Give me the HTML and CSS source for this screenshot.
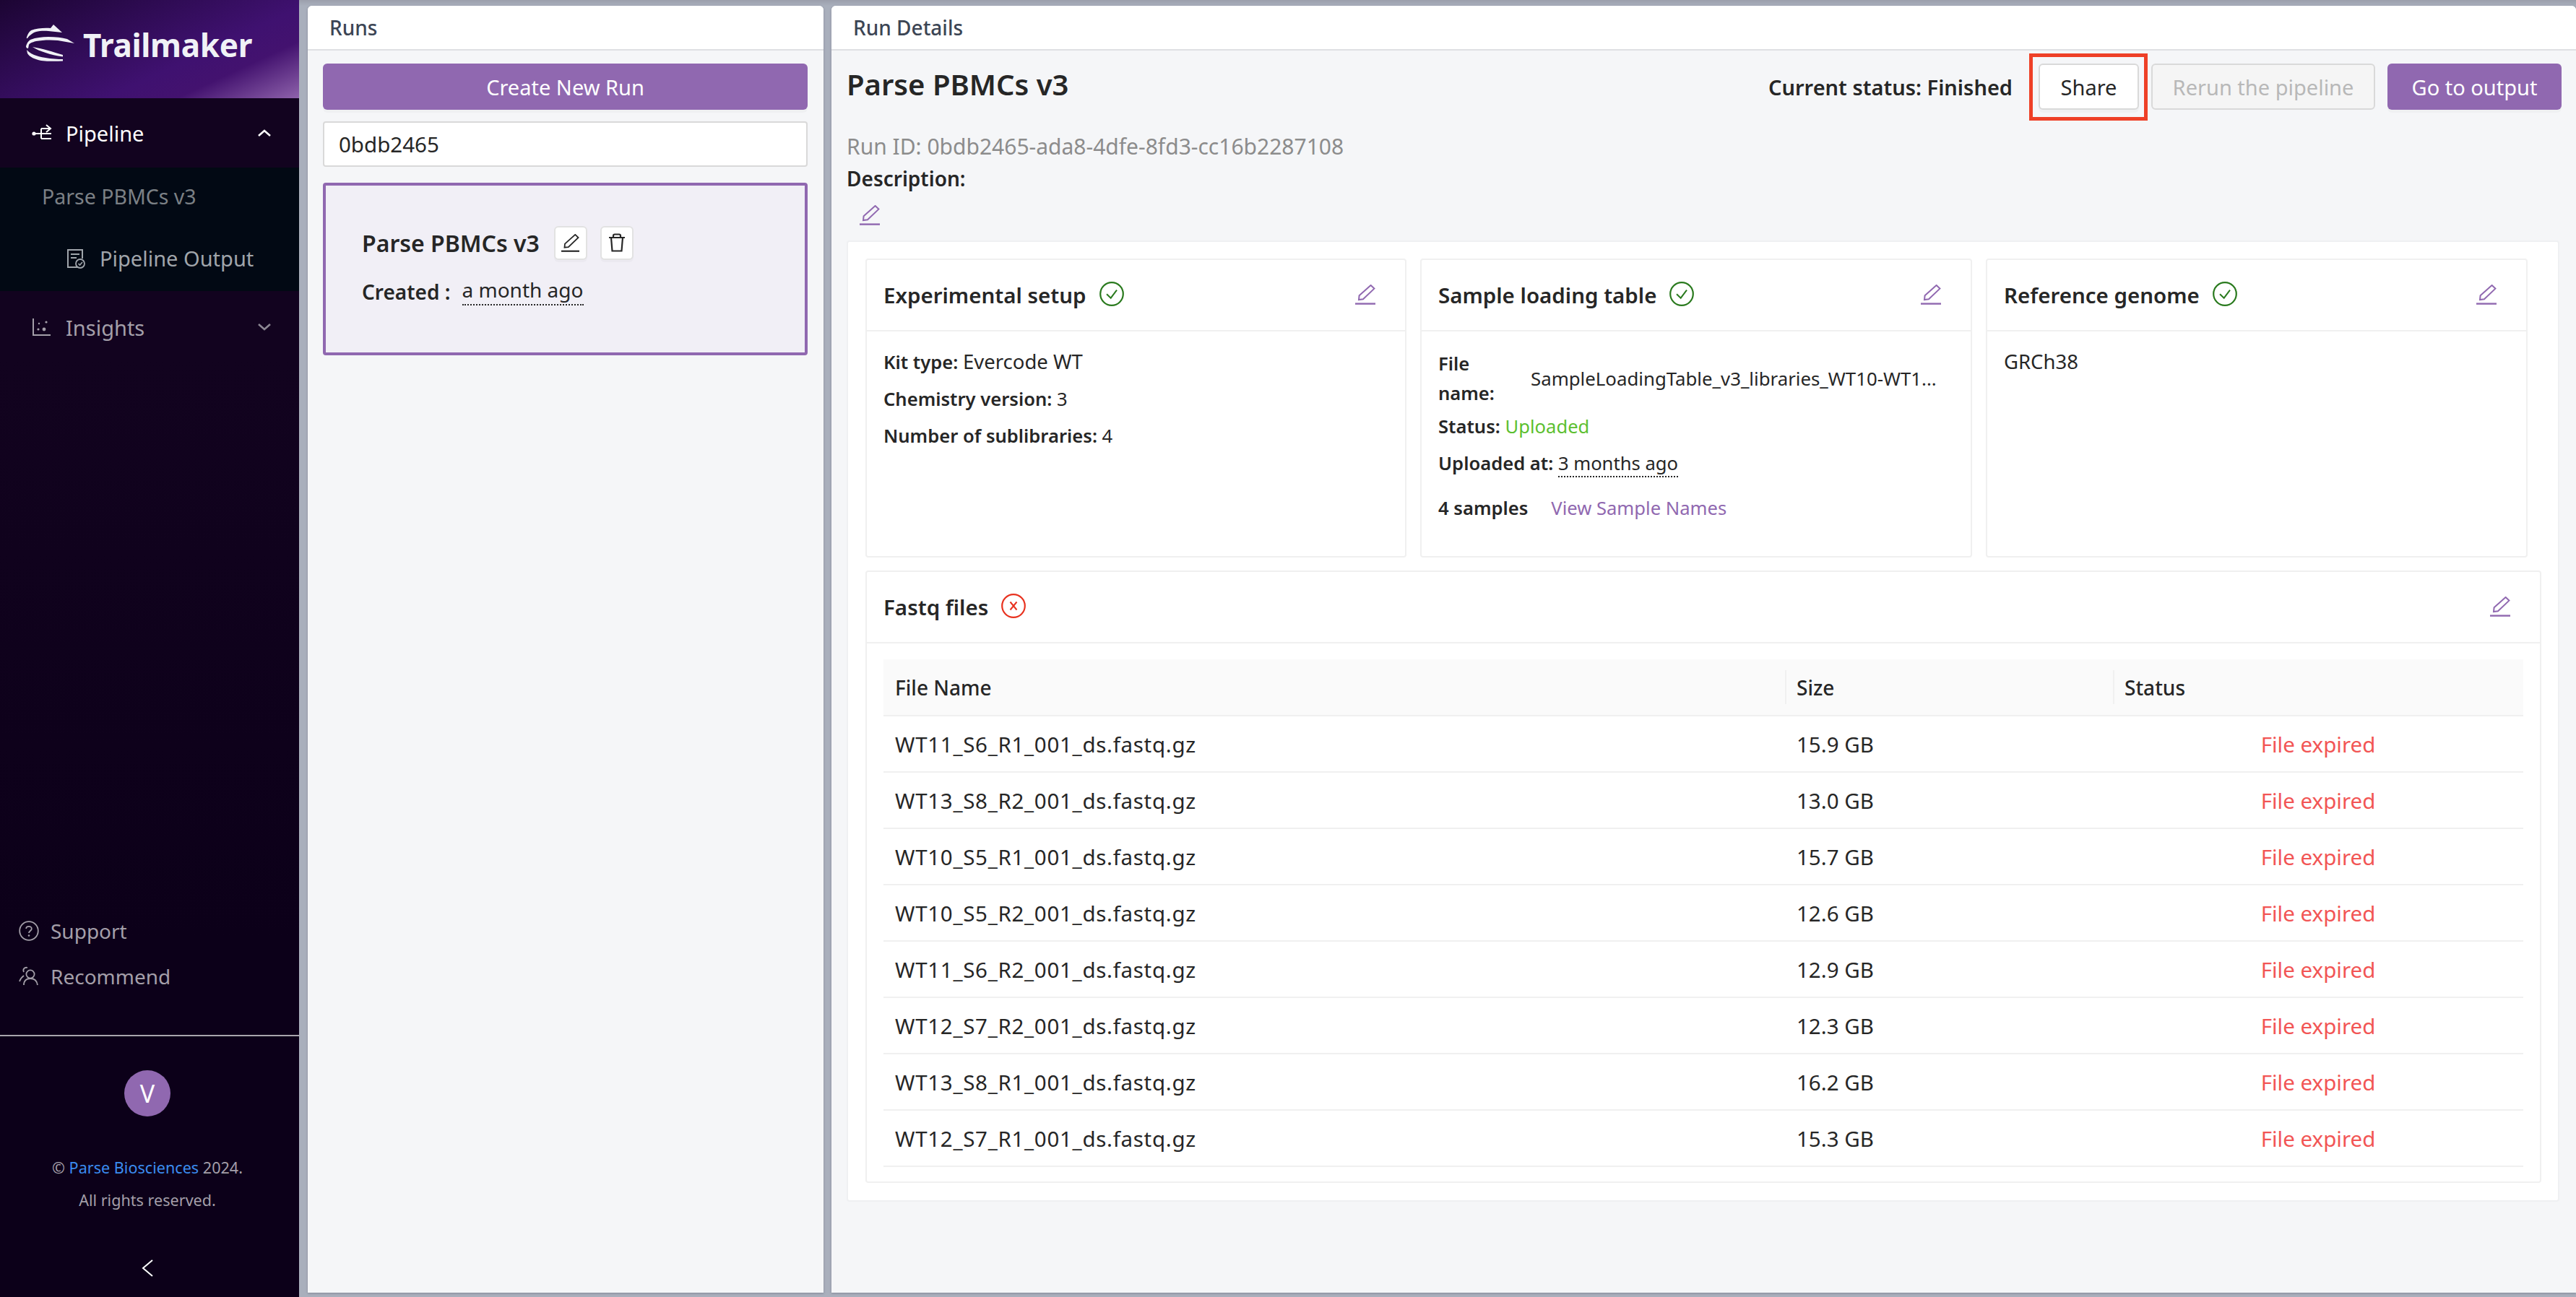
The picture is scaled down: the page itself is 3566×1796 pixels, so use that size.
FILE: index.html
```html
<!DOCTYPE html>
<html>
<head>
	<meta charset="utf-8">
	<title>Trailmaker</title>
	<link rel="stylesheet" href="styles.css">
</head>
<body>
<svg class="defs" width="0" height="0">
	<symbol id="pen" viewBox="0 0 28 28">
		<path d="M5 21 L5.6 15.3 L21.6 1 L26.4 5.6 L11 20.3 Z" fill="none" stroke="currentColor" stroke-width="2"/>
		<rect x="0" y="25.4" width="28" height="2.4" fill="currentColor"/>
	</symbol>
	<symbol id="ok" viewBox="0 0 34 34">
		<circle cx="17" cy="17" r="15.8" fill="none" stroke="#2a7a1e" stroke-width="2.2"/>
		<path d="M10 17.3 L15.7 22.7 L24 11.7" fill="none" stroke="#2a7a1e" stroke-width="2"/>
	</symbol>
</svg>

<div class="app">
	<aside class="side">
		<div class="brand">
			<svg class="brand-mark" viewBox="0 0 68 52" width="68" height="52">
				<path d="M0.7 19 C2 13 5 9.5 7 8 C15 5 25 4.5 34 5 L38 0 L50 11 L31 9 C24 8.5 18 9 14 10 C8 12 4 16 2 19 Z" fill="#f0f1f6"/>
				<path d="M0 30 C1 26 3 23 6 21 C14 18 22 17 31 17 C41 17 50 18 57 20 L67 26 L44 22 C34 21 22 21.5 14 23 C8 24.5 5 26 4 28 L3 33 C1 33 0 32 0 30 Z" fill="#f0f1f6"/>
				<path d="M9 31 C22 33 38 38 51 42 L51 44.5 C42 43.5 34 41.5 27 39 C20 37 14 34 9 31 Z" fill="#f0f1f6"/>
				<path d="M1 35 C5 40 14 44 27 46 C35 47.5 44 48 51 48 L51 50.5 C40 51 30 51 21 50 C12 48 5 45 2 40 Z" fill="#f0f1f6"/>
			</svg>
			<span class="brand-name">Trailmaker</span>
		</div>

		<div class="nav-item nav-open">
			<svg class="nav-ico" viewBox="0 0 28 26" width="28" height="26">
				<circle cx="3" cy="14" r="2.6" fill="#fff"/>
				<path d="M3 14 H13 M13 7 H26 M20 2 L26 7 L20 12 M13 7 V21 M13 21 H27 M13 14 H27" fill="none" stroke="#fff" stroke-width="2"/>
			</svg>
			<span>Pipeline</span>
			<svg class="chev" viewBox="0 0 20 12" width="20" height="12"><path d="M2 10 L10 3 L18 10" fill="none" stroke="#fff" stroke-width="2.6"/></svg>
		</div>
		<div class="subnav">
			<div class="sub-title">Parse PBMCs v3</div>
			<div class="sub-item">
				<svg viewBox="0 0 26 28" width="26" height="28">
					<path d="M16 26 H2 V2 H22 V14 M6 8 H18 M6 13 H14" fill="none" stroke="#a0a5ab" stroke-width="2"/>
					<circle cx="19" cy="21" r="6" fill="none" stroke="#a0a5ab" stroke-width="1.8"/>
					<path d="M16.5 21 L18.5 23 L22 19" fill="none" stroke="#a0a5ab" stroke-width="1.6"/>
				</svg>
				<span>Pipeline Output</span>
			</div>
		</div>
		<div class="nav-item nav-shut">
			<svg class="nav-ico" viewBox="0 0 28 26" width="28" height="26">
				<path d="M2 1 V24 H26" fill="none" stroke="#a49fa9" stroke-width="2"/>
				<circle cx="9" cy="16" r="1.6" fill="#a49fa9"/>
				<circle cx="17" cy="16" r="2.4" fill="#a49fa9"/>
				<circle cx="20" cy="6" r="1.6" fill="#a49fa9"/>
				<circle cx="10" cy="8" r="1.2" fill="#a49fa9"/>
			</svg>
			<span>Insights</span>
			<svg class="chev" viewBox="0 0 20 12" width="20" height="12"><path d="M2 2 L10 9 L18 2" fill="none" stroke="#8c8793" stroke-width="2.6"/></svg>
		</div>

		<div class="side-grow"></div>

		<div class="help-item">
			<svg viewBox="0 0 28 28" width="28" height="28">
				<circle cx="14" cy="14" r="12.8" fill="none" stroke="#a49fa9" stroke-width="1.8"/>
				<path d="M10.2 11 C10.2 6.8 17.8 6.8 17.8 11 C17.8 14 14 14 14 17" fill="none" stroke="#a49fa9" stroke-width="1.8"/>
				<circle cx="14" cy="20.5" r="1.3" fill="#a49fa9"/>
			</svg>
			<span>Support</span>
		</div>
		<div class="help-item">
			<svg viewBox="0 0 28 28" width="28" height="28">
				<circle cx="16" cy="11" r="5.6" fill="none" stroke="#a49fa9" stroke-width="1.8"/>
				<path d="M7 26 C7 19 11 17 16 17 C21 17 25 19 26 26 M12 2 C8 1 5 4 7 8 M7 13 C4 15 2 18 1 21" fill="none" stroke="#a49fa9" stroke-width="1.8"/>
			</svg>
			<span>Recommend</span>
		</div>

		<div class="side-foot">
			<div class="avatar">V</div>
			<div class="legal">© <span class="legal-link">Parse Biosciences</span> 2024.</div>
			<div class="legal">All rights reserved.</div>
			<svg class="collapse" viewBox="0 0 16 24" width="16" height="24"><path d="M15 1 L2 12 L15 23" fill="none" stroke="#fff" stroke-width="2"/></svg>
		</div>
	</aside>

	<main class="panels">
		<section class="panel panel-runs">
			<div class="panel-head">Runs</div>
			<div class="panel-body runs-body">
				<div class="btn btn-main btn-wide">Create New Run</div>
				<div class="search">0bdb2465</div>
				<div class="run-card">
					<div class="run-title">
						<span>Parse PBMCs v3</span>
						<span class="ico-btn"><svg width="25" height="25" color="#262626"><use href="#pen"/></svg></span>
						<span class="ico-btn">
							<svg viewBox="0 0 24 26" width="24" height="26">
								<path d="M1 6 H23 M7 6 V3.5 Q7 1.5 9 1.5 H15 Q17 1.5 17 3.5 V6 M4 6 L5.5 24.5 H18.5 L20 6" fill="none" stroke="#262626" stroke-width="2.2"/>
							</svg>
						</span>
					</div>
					<div class="run-created"><b>Created :</b><span class="dotted">a month ago</span></div>
				</div>
			</div>
		</section>

		<section class="panel panel-details">
			<div class="panel-head">Run Details</div>
			<div class="panel-body details-body">
				<div class="top-row">
					<h1 class="run-name">Parse PBMCs v3</h1>
					<div class="actions">
						<span class="status-now">Current status: Finished</span>
						<div class="btn btn-plain btn-share">Share<span class="mark"></span></div>
						<div class="btn btn-off">Rerun the pipeline</div>
						<div class="btn btn-main btn-go">Go to output</div>
					</div>
				</div>
				<div class="run-id">Run ID: 0bdb2465-ada8-4dfe-8fd3-cc16b2287108</div>
				<div class="desc">Description:</div>
				<svg class="pen desc-pen" width="28" height="28"><use href="#pen"/></svg>

				<div class="sheet">
					<div class="card-row">
						<div class="card">
							<div class="card-head">
								<span>Experimental setup</span>
								<svg class="state" width="34" height="34"><use href="#ok"/></svg>
								<svg class="pen card-pen" width="28" height="28"><use href="#pen"/></svg>
							</div>
							<div class="card-body">
								<p class="line"><b>Kit type:</b> <span class="val-wide">Evercode WT</span></p>
								<p class="line"><b>Chemistry version:</b> 3</p>
								<p class="line"><b>Number of sublibraries:</b> 4</p>
							</div>
						</div>
						<div class="card">
							<div class="card-head">
								<span>Sample loading table</span>
								<svg class="state" width="34" height="34"><use href="#ok"/></svg>
								<svg class="pen card-pen" width="28" height="28"><use href="#pen"/></svg>
							</div>
							<div class="card-body">
								<div class="file-line">
									<b class="file-label">File name:</b>
									<span class="file-value">SampleLoadingTable_v3_libraries_WT10-WT1...</span>
								</div>
								<p class="line"><b>Status:</b> <span class="green">Uploaded</span></p>
								<p class="line"><b>Uploaded at:</b> <span class="dotted">3 months ago</span></p>
								<p class="line line-samples"><b>4 samples</b><span class="purple">View Sample Names</span></p>
							</div>
						</div>
						<div class="card">
							<div class="card-head">
								<span>Reference genome</span>
								<svg class="state" width="34" height="34"><use href="#ok"/></svg>
								<svg class="pen card-pen" width="28" height="28"><use href="#pen"/></svg>
							</div>
							<div class="card-body">
								<p class="line val-wide">GRCh38</p>
							</div>
						</div>
					</div>

					<div class="card card-fastq">
						<div class="card-head">
							<span>Fastq files</span>
							<svg class="state" viewBox="0 0 34 34" width="34" height="34">
								<circle cx="17" cy="17" r="15.8" fill="none" stroke="#e8321f" stroke-width="2.2"/>
								<path d="M12.5 11.5 L21.5 22.5 M21.5 11.5 L12.5 22.5" fill="none" stroke="#e8321f" stroke-width="2"/>
							</svg>
							<svg class="pen card-pen" width="28" height="28"><use href="#pen"/></svg>
						</div>
						<div class="table-wrap">
							<table class="files">
								<colgroup>
									<col class="col-name">
									<col class="col-size">
									<col>
								</colgroup>
								<thead>
									<tr><th>File Name</th><th>Size</th><th>Status</th></tr>
								</thead>
								<tbody>
									<tr><td class="fname">WT11_S6_R1_001_ds.fastq.gz</td><td>15.9 GB</td><td class="expired">File expired</td></tr>
									<tr><td class="fname">WT13_S8_R2_001_ds.fastq.gz</td><td>13.0 GB</td><td class="expired">File expired</td></tr>
									<tr><td class="fname">WT10_S5_R1_001_ds.fastq.gz</td><td>15.7 GB</td><td class="expired">File expired</td></tr>
									<tr><td class="fname">WT10_S5_R2_001_ds.fastq.gz</td><td>12.6 GB</td><td class="expired">File expired</td></tr>
									<tr><td class="fname">WT11_S6_R2_001_ds.fastq.gz</td><td>12.9 GB</td><td class="expired">File expired</td></tr>
									<tr><td class="fname">WT12_S7_R2_001_ds.fastq.gz</td><td>12.3 GB</td><td class="expired">File expired</td></tr>
									<tr><td class="fname">WT13_S8_R1_001_ds.fastq.gz</td><td>16.2 GB</td><td class="expired">File expired</td></tr>
									<tr><td class="fname">WT12_S7_R1_001_ds.fastq.gz</td><td>15.3 GB</td><td class="expired">File expired</td></tr>
								</tbody>
							</table>
						</div>
					</div>
				</div>
			</div>
		</section>
	</main>
</div>
</body>
</html>
```

FILE: styles.css
```css
*{
	box-sizing:border-box;
}
html,body{
	margin:0;
	height:100%;
}
body{
	font-family:"Noto Sans",sans-serif;
	font-size:28px;
	color:#262626;
	background:#a9afbc;
}
.defs{
	position:absolute;
}
.app{
	display:flex;
	width:3566px;
	height:1796px;
	overflow:hidden;
}

/* sidebar */
.side{
	width:414px;
	flex:none;
	display:flex;
	flex-direction:column;
	background:linear-gradient(#12031f 0,#12031f 500px,#0c0019 1300px);
	color:#a49fa9;
}
.brand{
	height:136px;
	padding-left:36px;
	display:flex;
	align-items:center;
	gap:11px;
	background:linear-gradient(155deg,#1c0533 0%,#3f1170 62%,#43126f 76%,#8e62ab 100%);
}
.brand-mark{
	flex:none;
	margin-top:-16px;
}
.brand-name{
	font-weight:700;
	font-size:44px;
	color:#f0f1f6;
	margin-top:-12px;
	letter-spacing:-.3px;
}
.nav-item{
	height:96px;
	padding:0 38px 0 44px;
	display:flex;
	align-items:center;
	font-size:29px;
}
.nav-ico{
	flex:none;
	margin-right:19px;
}
.nav-open{
	color:#fff;
}
.nav-shut{
	height:100px;
}
.chev{
	margin-left:auto;
}
.subnav{
	background:#020914;
	height:171px;
}
.sub-title{
	height:80px;
	padding-left:58px;
	display:flex;
	align-items:center;
	font-size:28.5px;
	color:#7b8085;
}
.sub-item{
	height:91px;
	padding-left:92px;
	display:flex;
	align-items:center;
	gap:20px;
	font-size:29px;
	color:#a0a5ab;
}
.side-grow{
	flex:1;
}
.help-item{
	height:63px;
	padding-left:26px;
	display:flex;
	align-items:center;
	gap:16px;
	font-size:28px;
}
.side-foot{
	margin-top:50px;
	height:363px;
	padding:47px 6px 0 0;
	border-top:2px solid #a9a6ad;
	display:flex;
	flex-direction:column;
	align-items:center;
}
.avatar{
	width:64px;
	height:64px;
	border-radius:50%;
	background:#9068b0;
	color:#fff;
	font-size:34px;
	display:flex;
	align-items:center;
	justify-content:center;
	margin-bottom:48px;
}
.legal{
	font-size:21.6px;
	line-height:45px;
	color:#a49fa9;
}
.legal-link{
	color:#3b8cf0;
}
.collapse{
	margin-top:60px;
}

/* panels */
.panels{
	flex:1;
	display:flex;
	gap:11px;
	padding:8px 0 6px 12px;
	background:linear-gradient(#9b9fac 0,#a9afbc 8px);
}
.panel{
	display:flex;
	flex-direction:column;
	background:#f5f6f8;
	border-radius:6px 6px 0 0;
	box-shadow:0 1px 3px rgba(60,60,80,.35);
}
.panel-runs{
	width:714px;
	flex:none;
}
.panel-details{
	flex:1;
	min-width:0;
}
.panel-head{
	height:62px;
	flex:none;
	padding:0 30px;
	display:flex;
	align-items:center;
	background:#fff;
	border-bottom:2px solid #dfe0e3;
	border-radius:6px 6px 0 0;
	font-size:28px;
	font-weight:500;
	color:#3c4554;
}
.panel-body{
	flex:1;
}

/* buttons */
.btn{
	height:64px;
	display:flex;
	align-items:center;
	justify-content:center;
	border-radius:6px;
	font-size:29px;
}
.btn-main{
	background:#9068b0;
	color:#fff;
	box-shadow:0 4px 0 rgba(0,0,0,.025);
}
.btn-wide{
	width:671px;
}
.btn-plain{
	background:#fff;
	border:2px solid #d9d9d9;
	box-shadow:0 4px 0 rgba(0,0,0,.025);
}
.btn-off{
	width:310px;
	background:#f5f5f5;
	border:2px solid #d9d9d9;
	color:#b8b8b8;
}

/* runs column */
.runs-body{
	padding:18px 21px;
}
.search{
	margin-top:16px;
	width:671px;
	height:63px;
	padding:0 20px;
	display:flex;
	align-items:center;
	background:#fff;
	border:2px solid #d9d9d9;
	border-radius:4px;
	font-size:29.5px;
}
.run-card{
	margin-top:22px;
	width:671px;
	height:239px;
	padding:56px 50px 0;
	background:#f1eff6;
	border:4px solid #9068b0;
	border-radius:4px;
}
.run-title{
	display:flex;
	align-items:center;
	gap:18px;
	font-size:32px;
	font-weight:600;
	height:46px;
}
.run-title .ico-btn:nth-child(2){
	margin-left:2px;
}
.ico-btn{
	width:46px;
	height:47px;
	display:flex;
	align-items:center;
	justify-content:center;
	background:#fff;
	border:2px solid #e2e2e2;
	border-radius:6px;
	box-shadow:0 3px 0 rgba(0,0,0,.025);
}
.ico-btn svg{
	display:block;
}
.run-created{
	margin-top:26px;
	font-size:28px;
	display:flex;
	gap:16px;
}
.run-created b{
	font-weight:600;
}
.dotted{
	border-bottom:2px dotted #262626;
	line-height:1.2;
}

/* details column */
.details-body{
	padding:18px 20px 0 21px;
}
.top-row{
	height:64px;
	display:flex;
	justify-content:space-between;
}
.run-name{
	margin:0;
	font-size:40px;
	font-weight:600;
	line-height:58px;
}
.actions{
	display:flex;
	align-items:center;
}
.status-now{
	font-weight:600;
	font-size:29px;
	margin-right:36px;
}
.btn-share{
	width:139px;
	position:relative;
	margin-right:17px;
}
.mark{
	position:absolute;
	left:-15px;
	top:-16px;
	width:164px;
	height:93px;
	border:5px solid #ee4027;
}
.btn-off{
	margin-right:17px;
}
.btn-go{
	width:241px;
}
.run-id{
	margin-top:29px;
	font-size:30px;
	line-height:44px;
	color:#8c8c8c;
}
.desc{
	font-weight:600;
	font-size:28px;
	line-height:44px;
}
.pen{
	display:block;
	color:#9068b0;
}
.desc-pen{
	margin:15px 0 21px 18px;
}

/* cards */
.sheet{
	width:2371px;
	height:1331px;
	padding:23px 24px;
	background:#fff;
	border:2px solid #eff0f2;
	border-radius:4px;
}
.card-row{
	display:grid;
	grid-template-columns:749px 764px 750px;
	gap:19px;
}
.card{
	height:414px;
	background:#fff;
	border:2px solid #f0f0f0;
	border-radius:4px;
}
.card-head{
	height:99px;
	padding:0 41px 0 23px;
	display:flex;
	align-items:center;
	gap:18px;
	border-bottom:2px solid #f0f0f0;
	font-size:29.5px;
	font-weight:600;
}
.state{
	margin-top:-4px;
}
.card-pen{
	margin-left:auto;
	margin-top:-2px;
}
.card-body{
	padding:24px 23px;
	font-size:25.6px;
}
.line{
	margin:0 0 15px;
	line-height:36px;
}
.line b,.file-label{
	font-weight:600;
}
.val-wide{
	font-size:27.5px;
}
.file-line{
	display:flex;
	align-items:center;
	margin-bottom:8px;
}
.file-label{
	width:100px;
	flex:none;
	margin-right:28px;
	line-height:41px;
}
.file-value{
	white-space:nowrap;
	font-size:25.8px;
}
.green{
	color:#5cbf30;
}
.purple{
	color:#9068b0;
	margin-left:32px;
}
.line-samples{
	margin-top:26px;
}

/* fastq table */
.card-fastq{
	margin-top:18px;
	height:848px;
	width:2320px;
}
.table-wrap{
	padding:22px 23px;
}
table.files{
	width:2270px;
	border-collapse:collapse;
	table-layout:fixed;
	font-size:29.5px;
}
.col-name{
	width:1248px;
}
.col-size{
	width:454px;
}
.files th{
	position:relative;
	height:78px;
	padding:0 16px;
	text-align:left;
	font-size:28px;
	font-weight:500;
	background:#fafafa;
	border-bottom:2px solid #f0f0f0;
}
.files th+th::before{
	content:"";
	position:absolute;
	left:0;
	top:15px;
	bottom:15px;
	width:2px;
	background:#f0f0f0;
}
.files td{
	height:78px;
	padding:0 16px;
	border-bottom:2px solid #f0f0f0;
}
.files .fname{
	letter-spacing:.7px;
}
.expired{
	text-align:center;
	color:#f25555;
}
```
